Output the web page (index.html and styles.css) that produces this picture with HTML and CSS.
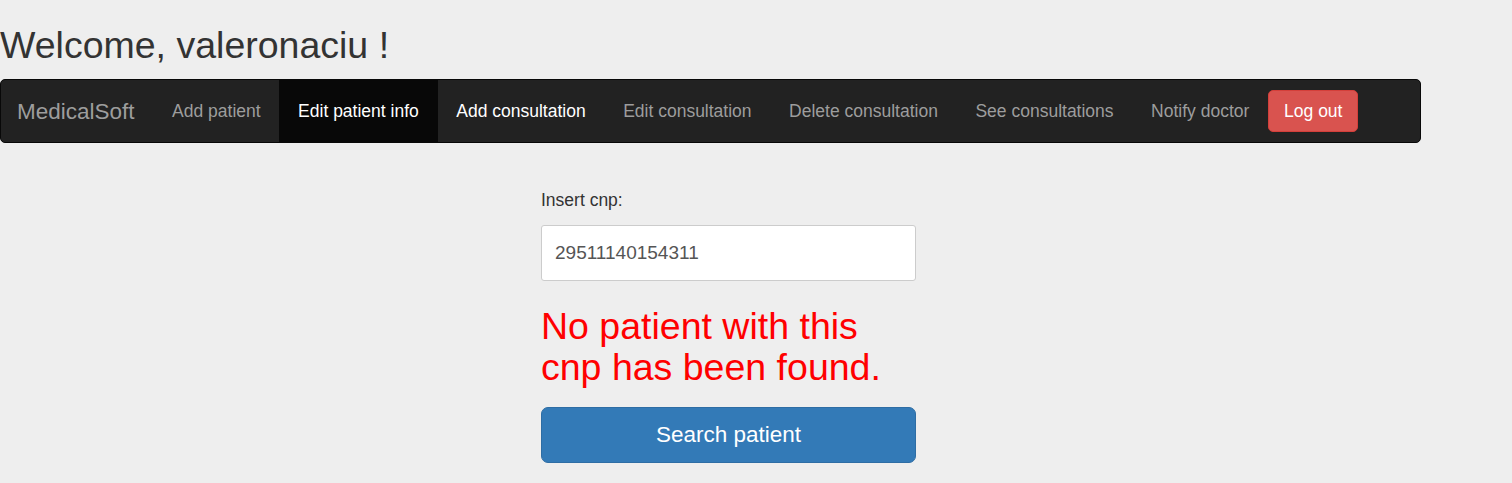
FILE: index.html
```html
<!DOCTYPE html>
<html>
<head>
<meta charset="utf-8">
<link rel="stylesheet" href="styles.css">
</head>
<body>
<h2 class="welcome">Welcome, valeronaciu !</h2>
<nav class="navbar">
  <a class="brand" href="#">MedicalSoft</a>
  <ul class="nav">
    <li><a href="#">Add patient</a></li>
    <li class="active"><a href="#">Edit patient info</a></li>
    <li class="focus"><a href="#">Add consultation</a></li>
    <li><a href="#">Edit consultation</a></li>
    <li><a href="#">Delete consultation</a></li>
    <li><a href="#">See consultations</a></li>
    <li><a href="#">Notify doctor</a></li>
    <li class="btn-item"><button class="btn-danger">Log out</button></li>
  </ul>
</nav>
<main class="content">
  <form class="search-form">
    <label class="label">Insert cnp:</label>
    <input class="input" type="text" value="29511140154311">
    <h2 class="error">No patient with this cnp has been found.</h2>
    <button type="button" class="btn-primary">Search patient</button>
  </form>
</main>
</body>
</html>
```
FILE: styles.css
```css
html, body {
  margin: 0;
  padding: 0;
  background: #eeeeee;
  font-family: "Liberation Sans", Arial, sans-serif;
  color: #333333;
  font-size: 17.5px;
  line-height: 1.42857;
}
.welcome {
  margin: 25px 0 12.5px 0;
  font-size: 37.5px;
  font-weight: 400;
  line-height: 1.1;
  color: #333333;
}
.navbar {
  box-sizing: border-box;
  width: 1421px;
  height: 64.5px;
  background: #222222;
  border: 1px solid #080808;
  border-radius: 5px;
  display: flex;
  align-items: flex-start;
  margin-bottom: 25px;
}
.brand {
  display: block;
  padding: 18.75px 18.75px 18.75px 16px;
  font-size: 22.5px;
  line-height: 25px;
  color: #9d9d9d;
  text-decoration: none;
}
.nav {
  list-style: none;
  margin: 0;
  padding: 0;
  display: flex;
}
.nav li a {
  display: block;
  padding: 18.75px;
  line-height: 25px;
  font-size: 17.5px;
  color: #9d9d9d;
  text-decoration: none;
}
.nav li.active a {
  background: #080808;
  color: #ffffff;
}
.nav li.focus a {
  color: #ffffff;
}
.btn-item {
  padding-top: 10px;
}
.btn-danger {
  height: 42.5px;
  padding: 7.5px 15px;
  font-family: "Liberation Sans", Arial, sans-serif;
  font-size: 17.5px;
  line-height: 25px;
  color: #ffffff;
  background: #d9534f;
  border: 1px solid #d43f3a;
  border-radius: 5px;
}
.content {
  padding-left: 541px;
  padding-top: 19.5px;
}
.search-form {
  width: 375px;
  display: flex;
  flex-direction: column;
}
.label {
  display: block;
  font-size: 17.5px;
  line-height: 25px;
  color: #333333;
  margin-bottom: 12px;
}
.input {
  box-sizing: border-box;
  width: 375px;
  height: 56px;
  padding: 0 13px;
  font-family: "Liberation Sans", Arial, sans-serif;
  font-size: 19px;
  color: #555555;
  background: #ffffff;
  border: 1px solid #cccccc;
  border-radius: 3px;
  margin: 0;
}
.error {
  margin: 25px 0 19px 0;
  font-size: 37.5px;
  font-weight: 400;
  line-height: 1.1;
  color: #ff0000;
}
.btn-primary {
  box-sizing: border-box;
  width: 375px;
  height: 56px;
  font-family: "Liberation Sans", Arial, sans-serif;
  font-size: 22.5px;
  color: #ffffff;
  background: #337ab7;
  border: 1px solid #2e6da4;
  border-radius: 7px;
}
```
